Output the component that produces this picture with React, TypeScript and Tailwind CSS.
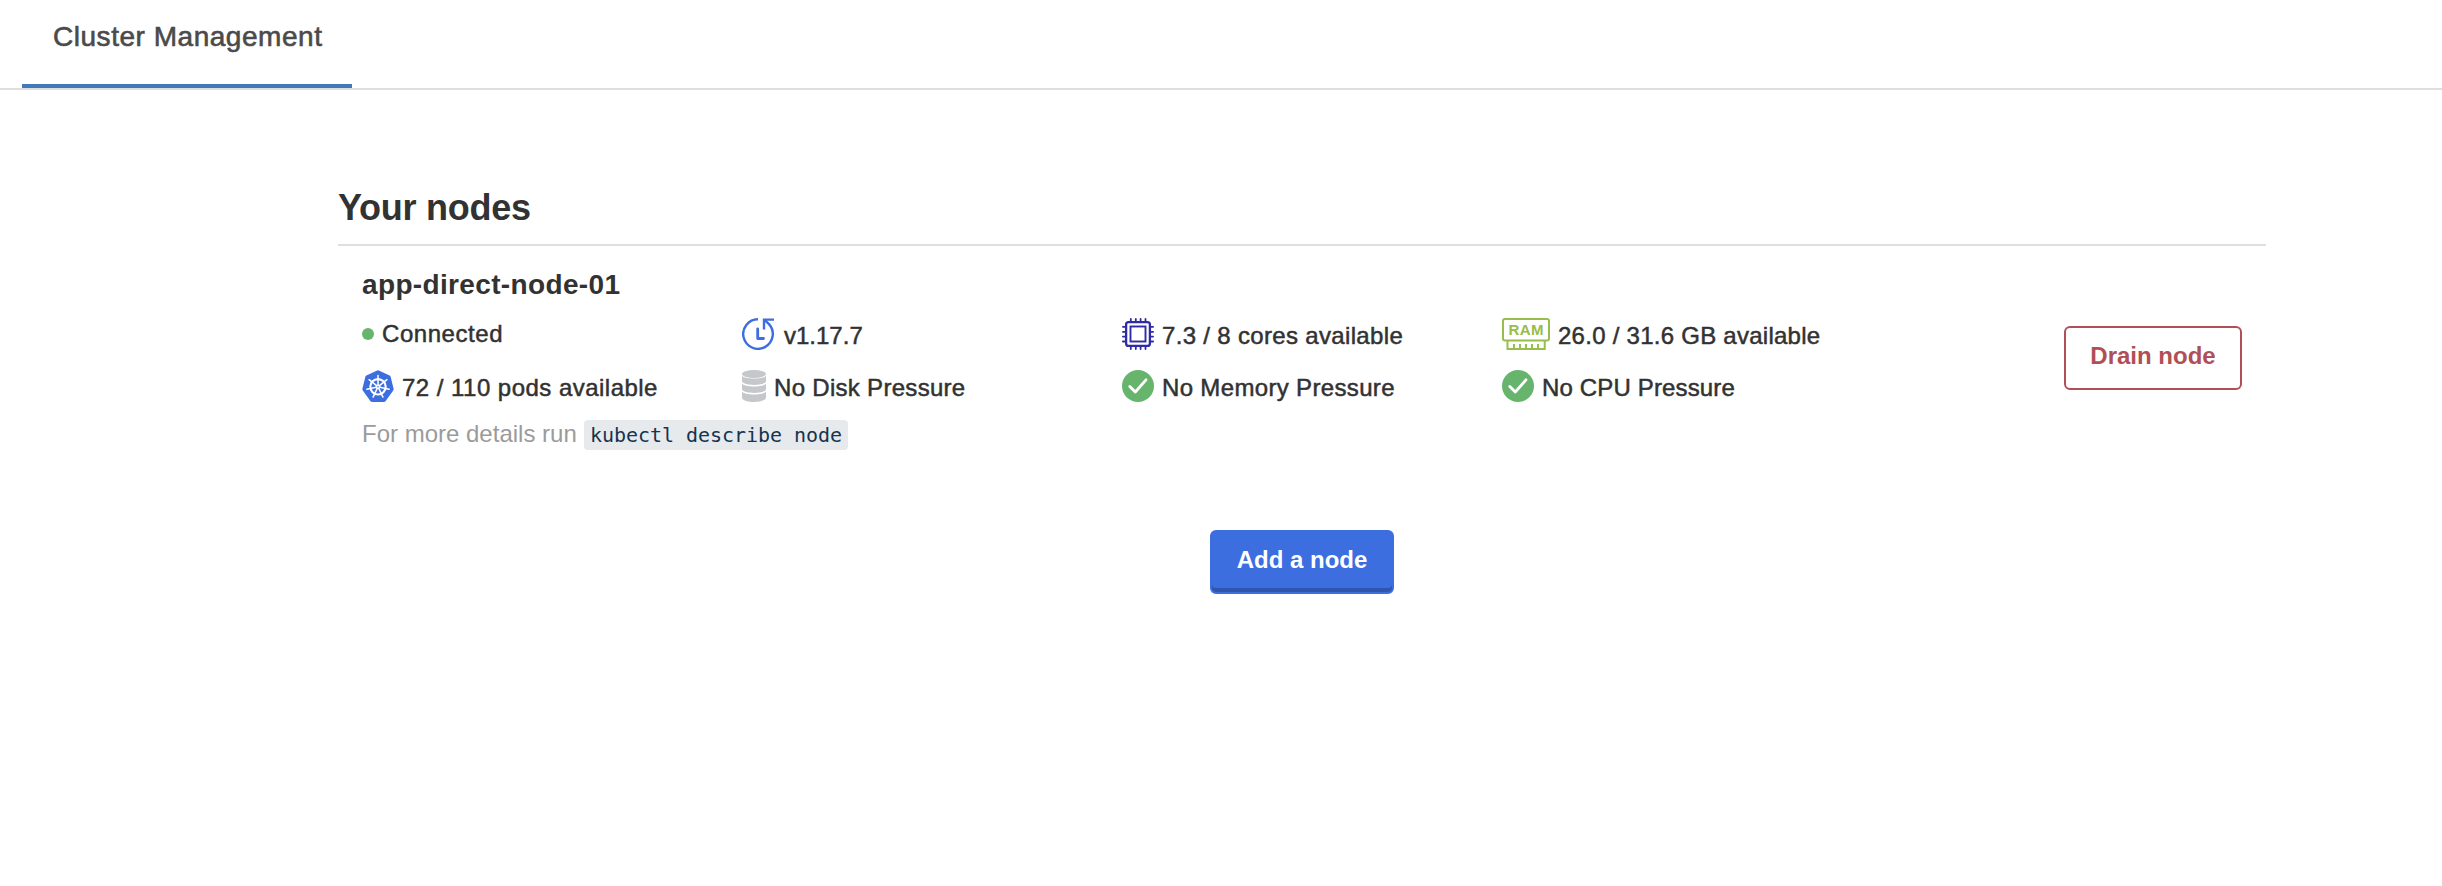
import React from "react";

function Kubernetes() {
  const spokes = [0, 1, 2, 3, 4, 5, 6];
  return (
    <svg width="32" height="32" viewBox="0 0 32 32" className="block shrink-0">
      <path
        d="M15.2 0.4Q16 0 16.8 0.4L27.6 5.5Q28.5 6 28.7 6.9L31.6 18.8Q31.8 19.7 31.2 20.5L23.5 31.2Q22.9 32 22 32H10Q9.1 32 8.5 31.2L0.8 20.5Q0.2 19.7 0.4 18.8L3.3 6.9Q3.5 6 4.4 5.5Z"
        fill="#3c6ee0"
      />
      <g stroke="#fff" fill="none" strokeLinecap="round">
        <circle cx="16" cy="16.8" r="7.7" strokeWidth="2.1" />
        {spokes.map((i) => (
          <path key={i} d="M16 15V5.4" strokeWidth="1.5" transform={`rotate(${(i * 360) / 7} 16 16.8)`} />
        ))}
      </g>
      <circle cx="16" cy="16.8" r="2.4" fill="#fff" />
      <circle cx="16" cy="16.8" r="0.8" fill="#3c6ee0" />
    </svg>
  );
}

function Version() {
  return (
    <svg width="32" height="32" viewBox="0 0 32 32" className="block shrink-0" fill="none" stroke="#3c6ee0" strokeWidth="2.4">
      <path d="M16 1.2A14.8 14.8 0 1 0 27 6.1L22.500 1.8" />
      <path d="M22 11.500V1.600H32" strokeWidth="2.4" />
      <path d="M15.7 11V20.5H21.5" strokeWidth="2.8" strokeLinecap="round" strokeLinejoin="round" />
    </svg>
  );
}

function Disk() {
  return (
    <svg width="24" height="32" viewBox="0 0 24 32" className="block shrink-0" fill="#c4c8ca">
      <ellipse cx="12" cy="4" rx="12" ry="4" />
      <path d="M0 5.8C2 9.5 22 9.5 24 5.8V11.5C22 16 2 16 0 11.5Z" />
      <path d="M0 13.5C2 17.5 22 17.5 24 13.5V19.5C22 24 2 24 0 19.5Z" />
      <path d="M0 21.5C2 25.5 22 25.5 24 21.5V28C22 33.3 2 33.3 0 28Z" />
    </svg>
  );
}

function Cpu() {
  return (
    <svg width="32" height="32" viewBox="0 0 32 32" className="block shrink-0" fill="none" stroke="#2f2aa5">
      <rect x="4.1" y="4.1" width="23.8" height="23.8" rx="2.5" strokeWidth="2.3" />
      <rect x="8.5" y="8.5" width="15" height="15" strokeWidth="1.9" />
      <path
        d="M8.8 0.900V4M13.800 0.900V4M18.600 0.900V4M23.500 0.900V4M8.800 28V31.100M13.800 28V31.100M18.600 28V31.100M23.500 28V31.100M0.900 8.800H4M0.900 13.800H4M0.900 18.600H4M0.900 23.500H4M28 8.800H31.100M28 13.800H31.100M28 18.600H31.100M28 23.500H31.100"
        strokeWidth="1.8"
        strokeLinecap="round"
      />
    </svg>
  );
}

function Ram() {
  return (
    <svg width="48" height="32" viewBox="0 0 48 32" className="block shrink-0" fill="none" stroke="#97bd4a">
      <rect x="1" y="1" width="46" height="21.4" rx="2" strokeWidth="2" />
      <path d="M5.500 22V31H42.700V22" strokeWidth="2" />
      <path d="M12 26V31M18 26V31M24 26V31M30 26V31M36 26V31" strokeWidth="1.9" />
      <text x="24" y="17" textAnchor="middle" textLength="35" fontSize="15" fontWeight="700" fontFamily="Liberation Sans, sans-serif" fill="#97bd4a" stroke="none">
        RAM
      </text>
    </svg>
  );
}

function Check() {
  return (
    <svg width="32" height="32" viewBox="0 0 32 32" className="block shrink-0">
      <circle cx="16" cy="16" r="16" fill="#67b56d" />
      <path d="M7.8 16.4L13.3 22L24 9.800" fill="none" stroke="#fff" strokeWidth="2.800" strokeLinecap="round" strokeLinejoin="round" />
    </svg>
  );
}

function Stat({ icon, children, className = "" }: { icon: React.ReactNode; children: React.ReactNode; className?: string }) {
  return (
    <div className="flex h-8 w-[380px] items-start">
      {icon}
      <span className={`block whitespace-nowrap pt-1 text-[24px] leading-[28px] text-[#323232] [-webkit-text-stroke:0.5px_currentColor] ${className}`}>
        {children}
      </span>
    </div>
  );
}

export default function App() {
  return (
    <div className="min-h-[886px] w-full bg-white font-['Liberation_Sans',Arial,sans-serif] text-[#323232]">
      <nav className="flex h-[90px] border-b-2 border-[#dfdfdf] pl-[22px]">
        <div className="h-[88px] w-[330px] border-b-4 border-[#4279b8] pl-[31px] pt-[19px] text-[28px] leading-[36px] tracking-[0.53px] text-[#4a4a4a] [-webkit-text-stroke:0.6px_currentColor]">
          <span className="whitespace-nowrap">Cluster Management</span>
        </div>
      </nav>

      <main className="ml-[338px] w-[1928px] pt-[94px]">
        <h1 className="h-[62px] border-b-2 border-[#dfdfdf] pt-[4px] text-[36px] font-bold leading-[40px] tracking-[-0.25px]">
          <span className="whitespace-nowrap">Your nodes</span>
        </h1>

        <section className="flex items-start justify-between px-6 pt-[22px]">
          <div>
            <h2 className="h-[50px] pt-px text-[28px] font-bold leading-[32px] tracking-[0.35px]">
              <span className="whitespace-nowrap">app-direct-node-01</span>
            </h2>
            <div className="flex">
              <Stat icon={<span className="mt-[10px] block size-3 shrink-0 rounded-full bg-[#67b56d]" />} className="-mt-[2px] pl-[8px] tracking-[0.55px]">
                Connected
              </Stat>
              <Stat icon={<Version />} className="pl-[10px]">v1.17.7</Stat>
              <Stat icon={<Cpu />} className="pl-[8px] tracking-[0.33px]">7.3 / 8 cores available</Stat>
              <Stat icon={<Ram />} className="pl-[8px] tracking-[0.26px]">26.0 / 31.6 GB available</Stat>
            </div>
            <div className="mt-5 flex">
              <Stat icon={<Kubernetes />} className="pl-[8px] tracking-[0.47px]">72 / 110 pods available</Stat>
              <Stat icon={<Disk />} className="pl-[8px] tracking-[0.3px]">No Disk Pressure</Stat>
              <Stat icon={<Check />} className="pl-[8px] tracking-[0.34px]">No Memory Pressure</Stat>
              <Stat icon={<Check />} className="pl-[8px] tracking-[0.15px]">No CPU Pressure</Stat>
            </div>
            <p className="mt-[18px] flex h-[30px] items-start text-[24px] leading-[28px] text-[#9b9b9b]">
              <span className="w-[222px] whitespace-nowrap">For more details run</span>
              <code className="h-[30px] w-[264px] whitespace-nowrap rounded bg-[#e6eaed] pl-[6px] font-['DejaVu_Sans_Mono',monospace] text-[20px] leading-[30px] tracking-[-0.04px] text-[#163350]">
                kubectl describe node
              </code>
            </p>
          </div>
          <button className="mt-[58px] h-16 w-[178px] rounded-md border-2 border-[#b04f57] pb-1 text-[24px] font-bold leading-[28px] text-[#b04f57]">
            Drain node
          </button>
        </section>

        <div className="mt-20 flex justify-center">
          <button className="h-16 w-[184px] rounded-md border-2 border-[#3c6ee0] bg-[#3c6ee0] pb-1 text-[24px] font-bold leading-[28px] text-white shadow-[inset_0_-4px_0_#2f55ae]">
            Add a node
          </button>
        </div>
      </main>
    </div>
  );
}
